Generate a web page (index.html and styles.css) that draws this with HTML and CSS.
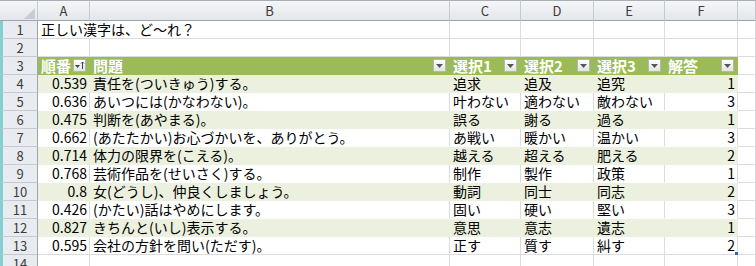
FILE: index.html
```html
<!DOCTYPE html>
<html lang="ja">
<head>
<meta charset="utf-8">
<link rel="stylesheet" href="styles.css">
</head>
<body>
<div class="sheet">
  <div class="corner"><svg class="sel" width="11" height="11" viewBox="0 0 11 11"><path d="M11 0 L11 11 L0 11 Z" fill="#c9cdd3"/></svg></div>
  <div class="ch">A</div><div class="ch">B</div><div class="ch">C</div><div class="ch">D</div><div class="ch">E</div><div class="ch">F</div><div class="ch"></div>

  <div class="rh">1</div><div class="t title">正しい漢字は、ど〜れ？</div><div class="t"></div><div></div><div></div><div></div><div></div><div></div>
  <div class="rh">2</div><div></div><div></div><div></div><div></div><div></div><div></div><div></div>

  <div class="rh">3</div>
  <div class="hd"><span>順番</span><span class="fb"><svg width="11" height="9" viewBox="0 0 11 9"><path d="M1 4 L6 4 L3.5 7 Z" fill="#444"/><path d="M8.5 1 L8.5 8 M7 2.5 L8.5 1 L10 2.5" stroke="#444" stroke-width="1" fill="none"/></svg></span></div>
  <div class="hd"><span>問題</span><span class="fb"><svg width="7" height="4" viewBox="0 0 7 4"><path d="M0 0 L7 0 L3.5 4 Z" fill="#555"/></svg></span></div>
  <div class="hd"><span>選択1</span><span class="fb"><svg width="7" height="4" viewBox="0 0 7 4"><path d="M0 0 L7 0 L3.5 4 Z" fill="#555"/></svg></span></div>
  <div class="hd"><span>選択2</span><span class="fb"><svg width="7" height="4" viewBox="0 0 7 4"><path d="M0 0 L7 0 L3.5 4 Z" fill="#555"/></svg></span></div>
  <div class="hd"><span>選択3</span><span class="fb"><svg width="7" height="4" viewBox="0 0 7 4"><path d="M0 0 L7 0 L3.5 4 Z" fill="#555"/></svg></span></div>
  <div class="hd"><span>解答</span><span class="fb"><svg width="7" height="4" viewBox="0 0 7 4"><path d="M0 0 L7 0 L3.5 4 Z" fill="#555"/></svg></span></div>
  <div></div>

  <div class="rh">4</div><div class="b n">0.539</div><div class="b t">責任を(ついきゅう)する。</div><div class="b t">追求</div><div class="b t">追及</div><div class="b t">追究</div><div class="b n">1</div><div></div>
  <div class="rh">5</div><div class="w n">0.636</div><div class="w t">あいつには(かなわない)。</div><div class="w t">叶わない</div><div class="w t">適わない</div><div class="w t">敵わない</div><div class="w n">3</div><div></div>
  <div class="rh">6</div><div class="b n">0.475</div><div class="b t">判断を(あやまる)。</div><div class="b t">誤る</div><div class="b t">謝る</div><div class="b t">過る</div><div class="b n">1</div><div></div>
  <div class="rh">7</div><div class="w n">0.662</div><div class="w t">(あたたかい)お心づかいを、ありがとう。</div><div class="w t">あ戦い</div><div class="w t">暖かい</div><div class="w t">温かい</div><div class="w n">3</div><div></div>
  <div class="rh">8</div><div class="b n">0.714</div><div class="b t">体力の限界を(こえる)。</div><div class="b t">越える</div><div class="b t">超える</div><div class="b t">肥える</div><div class="b n">2</div><div></div>
  <div class="rh">9</div><div class="w n">0.768</div><div class="w t">芸術作品を(せいさく)する。</div><div class="w t">制作</div><div class="w t">製作</div><div class="w t">政策</div><div class="w n">1</div><div></div>
  <div class="rh">10</div><div class="b n">0.8</div><div class="b t">女(どうし)、仲良くしましょう。</div><div class="b t">動詞</div><div class="b t">同士</div><div class="b t">同志</div><div class="b n">2</div><div></div>
  <div class="rh">11</div><div class="w n">0.426</div><div class="w t">(かたい)話はやめにします。</div><div class="w t">固い</div><div class="w t">硬い</div><div class="w t">堅い</div><div class="w n">3</div><div></div>
  <div class="rh">12</div><div class="b n">0.827</div><div class="b t">きちんと(いし)表示する。</div><div class="b t">意思</div><div class="b t">意志</div><div class="b t">遺志</div><div class="b n">1</div><div></div>
  <div class="rh">13</div><div class="n">0.595</div><div class="t">会社の方針を問い(ただす)。</div><div class="t">正す</div><div class="t">質す</div><div class="t">糾す</div><div class="n last">2</div><div></div>
  <div class="rh">14</div><div></div><div></div><div></div><div></div><div></div><div></div><div></div>
</div>
</body>
</html>
```

FILE: styles.css
```css
* { box-sizing: border-box; }
html, body { margin: 0; padding: 0; background: #fff; overflow: hidden; }
body {
  width: 756px;
  height: 266px;
  font-family: "Noto Sans CJK JP", "Noto Sans", sans-serif;
}
.sheet {
  display: grid;
  grid-template-columns: 38px 52px 360px 71px 73px 71px 73px 1fr;
  grid-template-rows: 21px repeat(14, 18px);
}
.sheet > div {
  border-right: 1px solid #dadcdd;
  border-bottom: 1px solid #dadcdd;
  font-size: 14px;
  line-height: 17px;
  white-space: nowrap;
  color: #000;
  position: relative;
}
.sheet > .corner,
.sheet > .ch {
  background: linear-gradient(#f5f6f8, #e3e6eb);
  border-top: 1px solid #a9aeb5;
  border-bottom-color: #9ea4ac;
  border-right-color: #c6cad0;
}
.corner { display: flex; align-items: flex-end; justify-content: flex-end; padding: 0 2px 1px 0; }
.sel { display: block; }
.sheet > .ch {
  text-align: center;
  font-size: 13px;
  line-height: 19px;
  color: #3c3c3c;
}
.sheet > .rh {
  background: #e8ebef;
  border-left: 3px solid #86cfd0;
  border-right-color: #9ea4ac;
  border-bottom-color: #c6cad0;
  text-align: center;
  font-size: 13px;
  color: #3c3c3c;
}
.sheet > .title { border-right-color: #fff; overflow: visible; }
.sheet > .hd {
  background: #9bbb59;
  border-color: #9bbb59;
  color: #fff;
  font-weight: bold;
  font-size: 15px;
  display: flex;
  align-items: center;
  padding-left: 3px;
}
.fb {
  margin-left: auto;
  margin-right: 3px;
  width: 13px;
  height: 13px;
  border: 1px solid #b4b8b0;
  background: linear-gradient(#ffffff, #e2e4e0);
  display: flex;
  align-items: center;
  justify-content: center;
}
.fb svg { display: block; }
.sheet > .b { background: #ebf1de; border-color: #ebf1de; }
.sheet > .w { border-bottom-color: #fff; }
.n { text-align: right; padding-right: 2px; }
.t { padding-left: 3px; }
.last::after {
  content: "";
  position: absolute;
  right: -1px;
  bottom: -1px;
  width: 3px;
  height: 3px;
  background: #3b62b8;
}
```
